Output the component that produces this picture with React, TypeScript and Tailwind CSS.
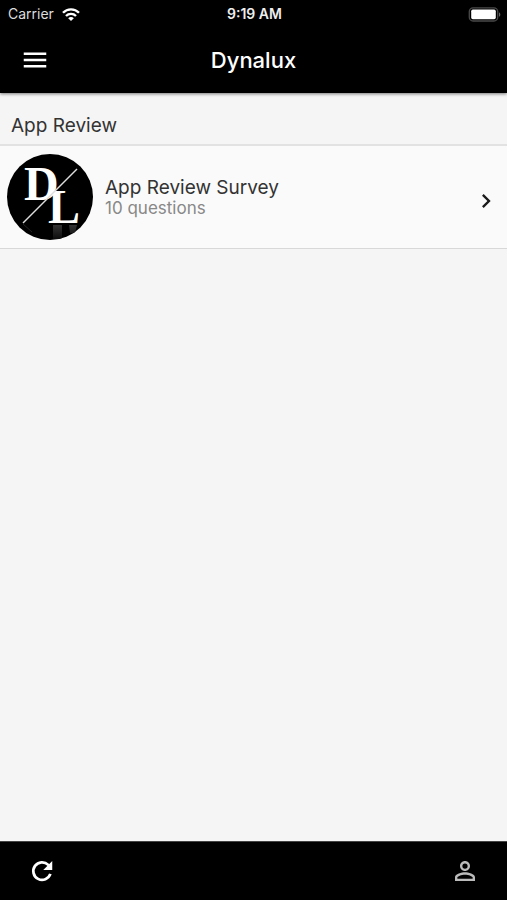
import { MdChevronRight, MdMenu, MdPersonOutline } from 'react-icons/md';

interface Survey {
  id: string;
  title: string;
  questions: number;
}

interface Section {
  name: string;
  surveys: Survey[];
}

const sections: Section[] = [
  { name: 'App Review', surveys: [{ id: 'app-review', title: 'App Review Survey', questions: 10 }] },
];

function WifiIcon() {
  return (
    <svg viewBox="0 0 18 13" className="w-[18px] h-[13px]" fill="none" stroke="#fff" strokeWidth="2.4" aria-hidden="true">
      <path d="M1 4.8a11 11 0 0 1 16 0" />
      <path d="M4 8a7 7 0 0 1 10 0" />
      <path d="M9 13 6.2 10.2a3.9 3.9 0 0 1 5.6 0z" fill="#fff" stroke="none" />
    </svg>
  );
}

function BatteryIcon() {
  return (
    <svg viewBox="0 0 33 15" className="w-[33px] h-[15px]" aria-hidden="true">
      <rect x="1.3" y="0.8" width="28.4" height="13.2" rx="3.8" fill="none" stroke="#4a4a4a" strokeWidth="1.3" />
      <rect x="3.2" y="2.6" width="24.6" height="9.6" rx="1.6" fill="#fff" />
      <path d="M31 5.2v4.6c1.8-.8 1.8-3.8 0-4.6z" fill="#666" />
    </svg>
  );
}

function RefreshIcon() {
  return (
    <svg viewBox="0 0 24 24" className="size-[30px]" fill="none" aria-hidden="true">
      <path d="M18.7 14.3A7 7 0 1 1 17 7.1l1 1" stroke="currentColor" strokeWidth="2.2" />
      <path d="M20.2 4v7.2H13z" fill="currentColor" />
    </svg>
  );
}

function Logo() {
  return (
    <svg viewBox="0 0 86 86" className="w-[86px] h-[86px] shrink-0" role="img" aria-label="Dynalux">
      <defs>
        <linearGradient id="reflection" x1="0" y1="0" x2="0" y2="1">
          <stop offset="0" stopColor="#333" />
          <stop offset="1" stopColor="#0c0c0c" />
        </linearGradient>
        <clipPath id="disc"><circle cx="43" cy="43" r="43" /></clipPath>
      </defs>
      <g clipPath="url(#disc)">
        <rect width="86" height="86" fill="#000" />
        <path d="M46 71h9v14h-9zM62 71h8l-2 8h-5z" fill="url(#reflection)" />
        <path d="M16 70l9 8" stroke="#222" strokeWidth="1" />
        <g fill="#fff" fontFamily="'Liberation Serif', serif" fontWeight="700" fontSize="48">
          <text x="17" y="46">D</text>
          <text x="41" y="69">L</text>
        </g>
        <path d="M16 69 70 15" stroke="#ddd" strokeWidth="1.5" />
      </g>
    </svg>
  );
}

function SurveyRow({ survey }: { survey: Survey }) {
  return (
    <li>
      <button className="w-full flex items-center gap-3 px-[7px] py-2 bg-[#fafafa] border-b border-[#d8d8d8] text-left">
        <Logo />
        <span className="flex-1 flex flex-col pt-0.5">
          <span className="text-[19px] leading-5 text-[#333]">{survey.title}</span>
          <span className="text-[17px] leading-5 text-[#888]">{survey.questions} questions</span>
        </span>
        <MdChevronRight className="size-7 mt-2 text-[#1a1a1a]" />
      </button>
    </li>
  );
}

export default function App() {
  return (
    <div className="min-h-screen flex flex-col bg-[#f5f5f5] font-['Inter','Liberation_Sans',sans-serif]">
      <header className="pb-0.5 bg-black text-white shadow-[0_1px_3px_rgba(0,0,0,0.5)]">
        <div className="h-7 grid grid-cols-3 items-center pl-2 pr-1.5">
          <div className="flex items-center gap-2 text-sm text-[#ddd]">
            Carrier
            <WifiIcon />
          </div>
          <div className="text-center text-sm font-semibold text-[#eee]">9:19 AM</div>
          <div className="flex justify-end"><BatteryIcon /></div>
        </div>
        <div className="h-[63px] grid grid-cols-[30px_1fr_30px] items-center px-5">
          <button aria-label="Menu"><MdMenu className="size-[30px]" /></button>
          <h1 className="text-center text-[22px] leading-7 font-medium">Dynalux</h1>
        </div>
      </header>

      <main className="flex-1">
        {sections.map(section => (
          <section key={section.name}>
            <h2 className="pt-[21px] pb-1.5 px-[11px] text-[19px] leading-6 text-[#333] border-b-2 border-[#e2e2e2]">{section.name}</h2>
            <ul>
              {section.surveys.map(s => <SurveyRow key={s.id} survey={s} />)}
            </ul>
          </section>
        ))}
      </main>

      <footer className="h-[59px] flex items-center justify-between px-[27px] bg-black border-t border-[#444] text-white">
        <button aria-label="Refresh"><RefreshIcon /></button>
        <button aria-label="Profile"><MdPersonOutline className="size-[30px] text-[#bbb]" /></button>
      </footer>
    </div>
  );
}
